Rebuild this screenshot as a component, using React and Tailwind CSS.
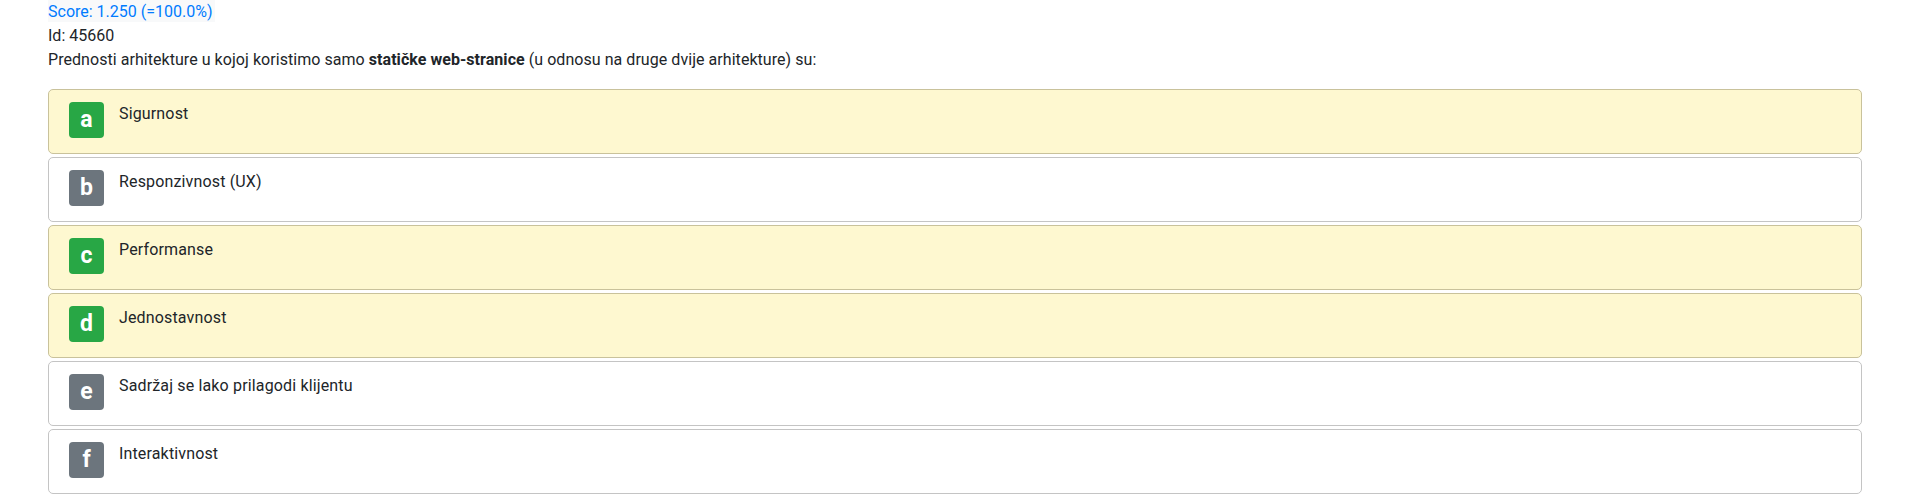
const ANSWERS = [
  { key: "a", text: "Sigurnost", correct: true },
  { key: "b", text: "Responzivnost (UX)", correct: false },
  { key: "c", text: "Performanse", correct: true },
  { key: "d", text: "Jednostavnost", correct: true },
  { key: "e", text: "Sadržaj se lako prilagodi klijentu", correct: false },
  { key: "f", text: "Interaktivnost", correct: false },
]

export default function App() {
  return (
    <div className="min-h-screen bg-white px-12 font-['Roboto',sans-serif] text-base leading-6 text-[#212529]">
      <div>
        <span className="inline-block h-[22px] bg-[#f8f9fa] pr-0.5 text-[#007bff]">Score: 1.250 (=100.0%)</span>
      </div>
      <div>Id: 45660</div>
      <div className="tracking-[0.05px]">
        Prednosti arhitekture u kojoj koristimo samo <b className="font-bold">statičke web-stranice</b> (u odnosu na druge dvije arhitekture) su:
      </div>

      <div className="mt-[17px] flex flex-col gap-[3px]">
        {ANSWERS.map((a) => (
          <div
            key={a.key}
            className={
              a.correct
                ? "flex items-start gap-[15px] rounded-[5px] border border-[#c9c29b] bg-[#fef8d0] pl-5 pt-3 pb-[15px]"
                : "flex items-start gap-[15px] rounded-[5px] border border-[#c4c4c4] bg-white pl-5 pt-3 pb-[15px]"
            }
          >
            <span
              className={
                a.correct
                  ? "flex h-[36px] w-[35px] shrink-0 items-center justify-center rounded-[4px] bg-[#28a745] text-[23px] font-bold text-white"
                  : "flex h-[36px] w-[35px] shrink-0 items-center justify-center rounded-[4px] bg-[#6c757d] text-[23px] font-bold text-white"
              }
            >
              {a.key}
            </span>
            <span className="tracking-[0.15px]">{a.text}</span>
          </div>
        ))}
      </div>
    </div>
  )
}
